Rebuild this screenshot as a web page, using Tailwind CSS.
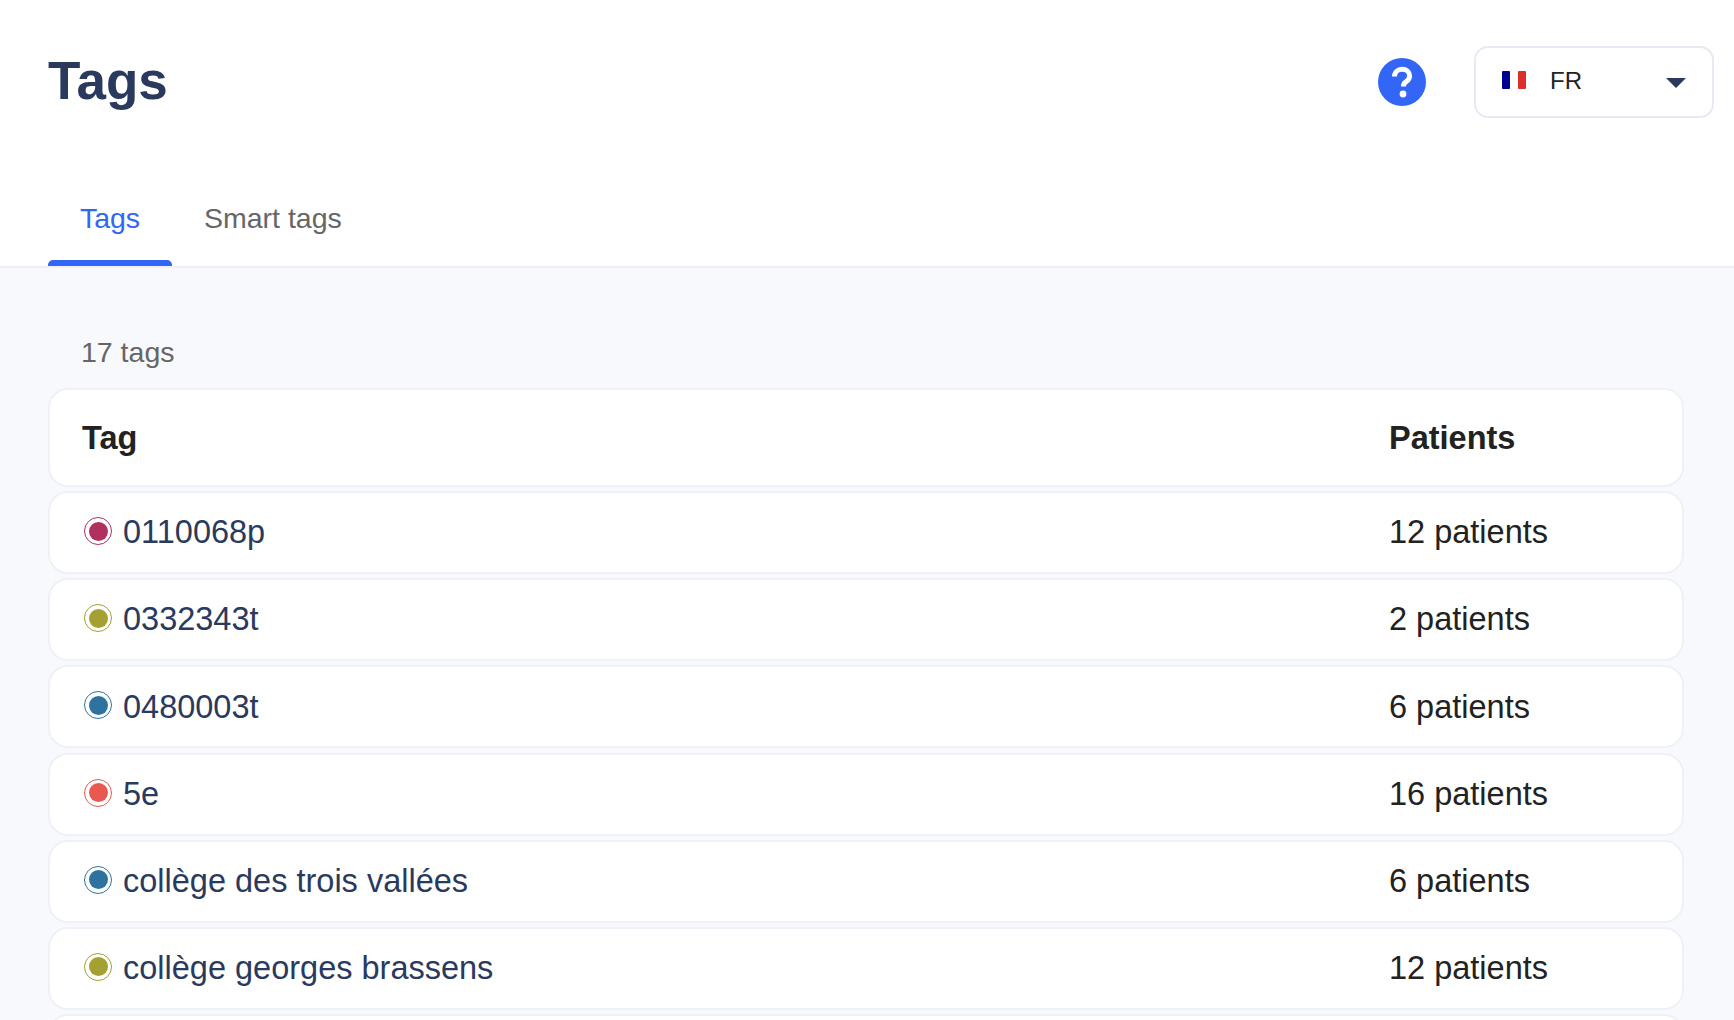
<!DOCTYPE html>
<html lang="en">
<head>
    <meta charset="UTF-8">
    <title>Tags</title>
    <script src="https://cdn.jsdelivr.net/npm/@tailwindcss/browser@4"></script>
</head>
<body class="h-[1020px] overflow-hidden bg-[#f8f9fd] font-['Liberation_Sans',Arial,sans-serif]">

    <header class="bg-white border-b-2 border-[#eef0f6] h-[268px]">
        <div class="flex items-start justify-between h-[164px] pl-[48px] pr-[20px]">
            <h1 class="mt-[49px] text-[53px] leading-[64px] font-bold text-[#2a3a5e]">Tags</h1>
            <div class="flex items-center gap-[48px] mt-[46px]">
                <!-- Help -->
                <svg class="w-[48px] h-[48px]" viewBox="0 0 48 48">
                    <circle cx="24" cy="24" r="24" fill="#3366f6"/>
                    <path d="M16.5 18.5c0-4.4 3.3-7.2 7.6-7.2 4.3 0 7.5 2.7 7.5 6.6 0 2.8-1.4 4.3-3.6 5.9-2 1.4-2.6 2.3-2.6 4.7" fill="none" stroke="#fff" stroke-width="5"/>
                    <circle cx="25" cy="36" r="3.4" fill="#fff"/>
                </svg>
                <!-- Language -->
                <div class="flex items-center w-[240px] h-[72px] bg-white border-2 border-[#e6eaf5] rounded-[14px] pl-[25px] pr-[26px]">
                    <svg class="w-[26px] h-[20px] mb-[4px]" viewBox="0 0 26 20">
                        <rect x="1" y="1" width="8" height="18" rx="1" fill="#00008f"/>
                        <rect x="17" y="1" width="8" height="18" rx="1" fill="#d9302a"/>
                    </svg>
                    <span class="ml-[23px] mb-[2px] text-[24px] text-[#222]">FR</span>
                    <svg class="ml-auto w-[20px] h-[10px] mt-[2px]" viewBox="0 0 20 10">
                        <path d="M0 0h20L10 10z" fill="#2a3a5e"/>
                    </svg>
                </div>
            </div>
        </div>
        <nav class="flex pl-[48px] text-[28.5px] leading-[40px] h-[102px]">
            <a class="flex flex-col items-center w-[124px] pt-[34px] h-[102px] text-[#3366f6]">
                Tags
                <span class="mt-auto w-full h-[6px] rounded-t-[5px] bg-[#3366f6]"></span>
            </a>
            <a class="pl-[32px] pt-[34px] text-[#666]">Smart tags</a>
        </nav>
    </header>

    <main class="pl-[48px] pr-[50px]">
        <p class="pl-[33px] pt-[68px] text-[28.5px] leading-[32px] text-[#666] mb-[20px]">17 tags</p>

        <div class="flex items-center h-[99px] pt-[2px] bg-white border-2 border-[#eef1f8] rounded-[20px] text-[32.5px] font-bold text-[#222] mb-[4px]">
            <div class="flex-1 pl-[32px]">Tag</div>
            <div class="w-[293px]">Patients</div>
        </div>

        <div class="flex flex-col gap-[4.2px]">
            <div class="flex items-center h-[83px] bg-white border-2 border-[#eef1f8] rounded-[20px] text-[32.5px]">
                <div class="flex-1 flex items-center gap-[11px] pl-[34px] text-[#2a3a5e]">
                    <span class="flex items-center justify-center w-[28px] h-[28px] mb-[3px] rounded-full border-[1.5px] border-[#b03060]"><span class="w-[19px] h-[19px] rounded-full bg-[#b03060]"></span></span>
                    0110068p
                </div>
                <div class="w-[293px] text-[#222]">12 patients</div>
            </div>
            <div class="flex items-center h-[83px] bg-white border-2 border-[#eef1f8] rounded-[20px] text-[32.5px]">
                <div class="flex-1 flex items-center gap-[11px] pl-[34px] text-[#2a3a5e]">
                    <span class="flex items-center justify-center w-[28px] h-[28px] mb-[3px] rounded-full border-[1.5px] border-[#a5a032]"><span class="w-[19px] h-[19px] rounded-full bg-[#a5a032]"></span></span>
                    0332343t
                </div>
                <div class="w-[293px] text-[#222]">2 patients</div>
            </div>
            <div class="flex items-center h-[83px] bg-white border-2 border-[#eef1f8] rounded-[20px] text-[32.5px]">
                <div class="flex-1 flex items-center gap-[11px] pl-[34px] text-[#2a3a5e]">
                    <span class="flex items-center justify-center w-[28px] h-[28px] mb-[3px] rounded-full border-[1.5px] border-[#2e73a0]"><span class="w-[19px] h-[19px] rounded-full bg-[#2e73a0]"></span></span>
                    0480003t
                </div>
                <div class="w-[293px] text-[#222]">6 patients</div>
            </div>
            <div class="flex items-center h-[83px] bg-white border-2 border-[#eef1f8] rounded-[20px] text-[32.5px]">
                <div class="flex-1 flex items-center gap-[11px] pl-[34px] text-[#2a3a5e]">
                    <span class="flex items-center justify-center w-[28px] h-[28px] mb-[3px] rounded-full border-[1.5px] border-[#e85a4f]"><span class="w-[19px] h-[19px] rounded-full bg-[#e85a4f]"></span></span>
                    5e
                </div>
                <div class="w-[293px] text-[#222]">16 patients</div>
            </div>
            <div class="flex items-center h-[83px] bg-white border-2 border-[#eef1f8] rounded-[20px] text-[32.5px]">
                <div class="flex-1 flex items-center gap-[11px] pl-[34px] text-[#2a3a5e]">
                    <span class="flex items-center justify-center w-[28px] h-[28px] mb-[3px] rounded-full border-[1.5px] border-[#2e73a0]"><span class="w-[19px] h-[19px] rounded-full bg-[#2e73a0]"></span></span>
                    collège des trois vallées
                </div>
                <div class="w-[293px] text-[#222]">6 patients</div>
            </div>
            <div class="flex items-center h-[83px] bg-white border-2 border-[#eef1f8] rounded-[20px] text-[32.5px]">
                <div class="flex-1 flex items-center gap-[11px] pl-[34px] text-[#2a3a5e]">
                    <span class="flex items-center justify-center w-[28px] h-[28px] mb-[3px] rounded-full border-[1.5px] border-[#a5a032]"><span class="w-[19px] h-[19px] rounded-full bg-[#a5a032]"></span></span>
                    collège georges brassens
                </div>
                <div class="w-[293px] text-[#222]">12 patients</div>
            </div>
            <div class="h-[83px] bg-white border-2 border-[#eef1f8] rounded-[20px]"></div>
        </div>
    </main>

</body>
</html>
